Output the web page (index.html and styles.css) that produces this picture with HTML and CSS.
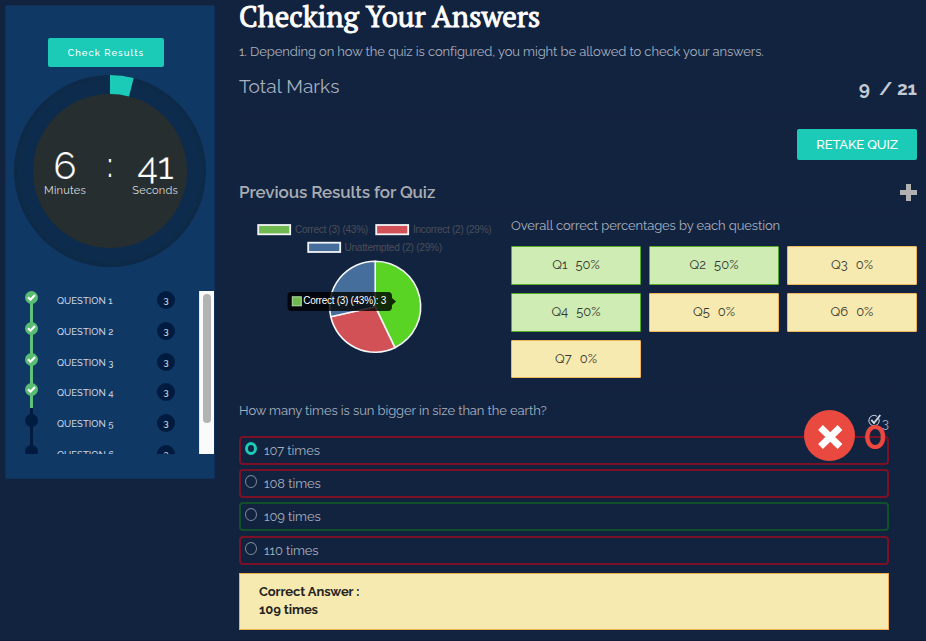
FILE: index.html
```html
<!DOCTYPE html>
<html lang="en">
<head>
<meta charset="utf-8">
<title>Quiz Results</title>
<link rel="stylesheet" href="styles.css">
</head>
<body>
<div class="page">
  <aside class="sidebar">
    <button class="btn check">Check Results</button>
    <div class="timer">
      <svg class="ring" viewBox="0 0 192 192">
        <defs><radialGradient id="track"><stop offset="0.9" stop-color="#0d2c4d"/><stop offset="1" stop-color="#0d2947"/></radialGradient></defs>
        <circle cx="96" cy="96" r="96" fill="url(#track)"/>
        <circle cx="96" cy="96" r="77" fill="#262e30"/>
        <path d="M96 0A96 96 0 0 1 119.7 3L115 21.4A77 77 0 0 0 96 19Z" fill="#1ccab8"/>
      </svg>
      <div class="clock">
        <div class="unit"><b>6</b><span class="min">Minutes</span></div>
        <b class="colon">:</b>
        <div class="unit"><b class="seconds">41</b><span class="sec">Seconds</span></div>
      </div>
    </div>
    <div class="nav">
      <ol class="steps">
        <li class="done"><i class="dot"><svg viewBox="0 0 13 13"><path d="M3 6.3 5.4 8.7 10 3.9"/></svg></i><span>QUESTION 1</span><em>3</em></li>
        <li class="done"><i class="dot"><svg viewBox="0 0 13 13"><path d="M3 6.3 5.4 8.7 10 3.9"/></svg></i><span>QUESTION 2</span><em>3</em></li>
        <li class="done"><i class="dot"><svg viewBox="0 0 13 13"><path d="M3 6.3 5.4 8.7 10 3.9"/></svg></i><span>QUESTION 3</span><em>3</em></li>
        <li class="done last"><i class="dot"><svg viewBox="0 0 13 13"><path d="M3 6.3 5.4 8.7 10 3.9"/></svg></i><span>QUESTION 4</span><em>3</em></li>
        <li><i class="dot"></i><span>QUESTION 5</span><em>3</em></li>
        <li><i class="dot"></i><span>QUESTION 6</span><em>3</em></li>
      </ol>
      <div class="scrollbar"><div class="thumb"></div></div>
    </div>
  </aside>
  <main class="main">
    <h1>Checking Your Answers</h1>
    <p class="intro">1. Depending on how the quiz is configured, you might be allowed to check your answers.</p>
    <div class="marks"><span class="label">Total Marks</span><span class="score"><span>9</span><span>/ 21</span></span></div>
    <div class="actions"><button class="btn retake">RETAKE QUIZ</button></div>
    <div class="previous"><h2>Previous Results for Quiz</h2>
      <svg class="plus" viewBox="0 0 17 17"><path d="M6 0h5v6h6v5h-6v6H6v-6H0V6h6z"/></svg>
    </div>
    <section class="results">
      <svg class="chart" viewBox="239 216 272 150">
        <g stroke="#f1f3f6" stroke-width="1.800">
          <rect x="258.200" y="225" width="32" height="9.300" fill="#70b951"/>
          <rect x="376.200" y="225" width="32" height="9.300" fill="#d15156"/>
          <rect x="308.200" y="242.700" width="32" height="9.300" fill="#456e9d"/>
        </g>
        <g class="legend">
          <text x="295" y="233.200" textLength="73">Correct (3) (43%)</text>
          <text x="413" y="233.200" textLength="78.500">Incorrect (2) (29%)</text>
          <text x="344.500" y="251" textLength="97.500">Unattempted (2) (29%)</text>
        </g>
        <g stroke="#f4f6f8" stroke-width="1.600" stroke-linejoin="round">
          <path d="M375.200 306.700V261.200A45.500 45.500 0 0 1 394.900 347.700Z" fill="#59d424"/>
          <path d="M375.200 306.700 394.900 347.700A45.500 45.500 0 0 1 330.800 316.800Z" fill="#d15156"/>
          <path d="M375.200 306.700 330.800 316.800A45.500 45.500 0 0 1 375.200 261.200Z" fill="#456e9d"/>
        </g>
        <path d="M291.500 292H388a4 4 0 0 1 4 4v2l4 3.500-4 3.500v2a4 4 0 0 1-4 4h-96.500a4 4 0 0 1-4-4v-11a4 4 0 0 1 4-4Z" fill="#000" fill-opacity=".8"/>
        <rect x="292.300" y="296.800" width="9" height="9" fill="#70b951" stroke="#b4dda3"/>
        <text class="tip" x="303.300" y="304.300" textLength="83">Correct (3) (43%): 3</text>
      </svg>
      <div class="overall">
        <p>Overall correct percentages by each question</p>
        <div class="tiles">
          <div class="tile good"><span>Q1</span><span>50%</span></div>
          <div class="tile good"><span>Q2</span><span>50%</span></div>
          <div class="tile"><span>Q3</span><span>0%</span></div>
          <div class="tile good"><span>Q4</span><span>50%</span></div>
          <div class="tile"><span>Q5</span><span>0%</span></div>
          <div class="tile"><span>Q6</span><span>0%</span></div>
          <div class="tile"><span>Q7</span><span>0%</span></div>
        </div>
      </div>
    </section>
    <section class="question">
      <p class="ask">How many times is sun bigger in size than the earth?</p>
      <div class="option picked"><i class="radio"></i><span>107 times</span></div>
      <div class="option"><i class="radio"></i><span>108 times</span></div>
      <div class="option right"><i class="radio"></i><span>109 times</span></div>
      <div class="option"><i class="radio"></i><span>110 times</span></div>
      <div class="answer"><span>Correct Answer :</span><br><span>109 times</span></div>
      <svg class="wrong" viewBox="0 0 51 51"><circle cx="25.500" cy="25.500" r="25.500" fill="#e9493e"/><path d="M16.500 17.500 36 36.500M36 17.500 16.500 36.500" stroke="#fff" stroke-width="6.800"/></svg>
      <div class="worth"><svg viewBox="0 0 14 13"><path d="M10.800 4.500A5.200 5.200 0 1 1 9 2.300" stroke-width="1"/><path d="M3.300 5.800 6 9 12.300 1" stroke-width="1.800"/></svg><span>3</span></div>
      <div class="got">0</div>
    </section>
  </main>
</div>
</body>
</html>
```
FILE: styles.css
```css
* { box-sizing: border-box; }
body { margin: 0; background: #122340; color: #a6b0bf; font-family: Raleway, Lato, sans-serif; font-size: 13px; letter-spacing: -.1px; overflow: hidden; }
h1, h2, p, ol { margin: 0; padding: 0; font-weight: 400; }
.page { display: flex; height: 641px; border-bottom: 1px solid #0e1c36; }
.sidebar { width: 210px; height: 474px; margin: 5px 24px 0 5px; padding-top: 32px; background: #0f3864; border: 1px solid #12315a; border-radius: 2px; flex: none; letter-spacing: 0; }
.btn { display: block; border: 0; padding: 0; background: #1ccab8; color: #fff; font-family: inherit; border-radius: 2px; }
.check { width: 116px; height: 29px; margin-left: 42px; font-size: 9.5px; font-weight: 500; letter-spacing: 1.02px; }
.timer { position: relative; width: 192px; height: 192px; margin: 8px 0 0 8px; }
.ring { display: block; width: 192px; height: 192px; }
.clock { position: absolute; left: 30px; top: 71px; width: 134px; display: flex; justify-content: space-between; color: #fff; }
.clock b { font-weight: 400; font-size: 38px; line-height: 39px; height: 38px; }
.clock .seconds { letter-spacing: -.5px; }
.unit { display: flex; flex-direction: column; align-items: center; }
.unit b { -webkit-text-stroke: .2px #262e30; }
.unit span { font-size: 11px; line-height: 13px; color: #d9dcdd; }
.unit .min { letter-spacing: .25px; }
.unit .sec { letter-spacing: .2px; }
.clock .colon { font-size: 34px; font-weight: 400; width: 10px; margin-left: 5px; line-height: 39px; }
.nav { display: flex; justify-content: space-between; height: 163px; margin-top: 24px; overflow: hidden; }
.steps { list-style: none; margin-left: 19px; width: 150px; }
.steps li { position: relative; display: flex; height: 30.8px; align-items: flex-start; color: #cbd7e4; font-size: 9.5px; font-weight: 500; }
.steps li::before { content: ""; position: absolute; left: 5px; top: 6px; width: 3px; height: 31px; background: #001b40; }
.steps .done::before { background: #5fc279; }
.steps .last::before { height: 19px; }
.steps .last::after { content: ""; position: absolute; left: 5px; top: 25px; width: 3px; height: 12px; background: #001b40; }
.dot { position: relative; width: 13px; height: 13px; border-radius: 50%; background: #001b40; }
.done .dot { background: #59bc73; }
.dot svg { display: block; fill: none; stroke: #fff; stroke-width: 2.2; }
.steps span { margin-left: 19px; line-height: 20px; letter-spacing: .03px; }
.steps em { margin-left: auto; width: 18px; height: 18px; border-radius: 50%; background: #001b40; font-style: normal; text-align: center; line-height: 18px; font-size: 10px; }
.scrollbar { width: 15px; background: #fafafa; padding: 3px 3px 0 3px; border-left: 1px solid #e6e9ed; }
.thumb { height: 129px; border-radius: 4px; background: #b3b3b3; }
.main { width: 678px; }
h1 { height: 34px; font: 400 29px/32px "PT Serif", "Liberation Serif", serif; letter-spacing: -.03px; -webkit-text-stroke: .9px #fff; color: #fff; white-space: nowrap; }
.intro { height: 36px; line-height: 36px; white-space: nowrap; }
.marks { display: flex; justify-content: space-between; height: 43px; border-bottom: 1px solid #15223b; }
.label { font-size: 19px; line-height: 32px; letter-spacing: .08px; }
.score { display: flex; gap: 9px; font-size: 19px; font-weight: 700; line-height: 36px; color: #c3cad4; letter-spacing: 0; }
.actions { display: flex; justify-content: flex-end; padding-top: 16px; height: 64px; }
.retake { width: 120px; height: 31px; font-size: 13px; font-weight: 500; letter-spacing: -.15px; }
.previous { display: flex; justify-content: space-between; height: 32px; border-bottom: 1px solid #15223b; }
h2 { font-size: 17px; font-weight: 600; line-height: 30px; color: #a9adb2; }
.plus { width: 17px; height: 17px; margin-top: 7px; fill: #b1b1b1; }
.results { display: flex; width: 650px; padding-top: 7px; height: 182px; border-bottom: 1px solid #15223b; }
.chart { width: 272px; height: 150px; flex: none; }
.legend { font: 10px "Liberation Sans", Arial, sans-serif; fill: #4a4f57; }
.tip { font: 10px "Liberation Sans", Arial, sans-serif; fill: #fff; }
.overall { flex: none; }
.overall p { height: 30px; line-height: 20px; }
.tiles { display: grid; grid-template-columns: repeat(3, 130px); grid-template-rows: 39px 39px 38px; gap: 8px; }
.tile { display: flex; justify-content: center; align-items: center; gap: 8px; padding-bottom: 2px; background: #f7eab1; border: 1px solid #f0b65c; border-radius: 1px; color: #35362e; letter-spacing: 0; }
.tile.good { background: #cfecb5; border-color: #58aa2b; }
.question { position: relative; width: 650px; margin-top: 10px; }
.ask { height: 35px; line-height: 20px; }
.option { display: flex; height: 29px; margin-bottom: 4.2px; border: 2px solid #7b1026; border-radius: 4px; padding-left: 4px; }
.option.right { border-color: #10502b; }
.option span { margin-left: 7px; line-height: 26px; }
.radio { width: 12px; height: 13px; margin-top: 4px; border: 1px solid #7d8999; border-radius: 50%; }
.picked .radio { border: 3.500px solid #1ccab8; border-radius: 50%; }
.answer { height: 57px; margin-top: 8.6px; padding: 9px 19px; background: #f7eab1; border: 1px solid #f0ae4c; font-weight: 700; line-height: 18px; color: #25241f; letter-spacing: -.1px; }
.wrong { position: absolute; left: 565px; top: 9px; width: 51px; height: 51px; }
.worth { position: absolute; left: 629px; top: 13px; display: flex; line-height: 19px; }
.worth svg { width: 14px; height: 13px; fill: none; stroke: #d4d9e0; }
.got { position: absolute; left: 624px; top: 14px; width: 24px; text-align: center; color: #e9493e; font-size: 39px; line-height: 40px; font-weight: 600; }
```
